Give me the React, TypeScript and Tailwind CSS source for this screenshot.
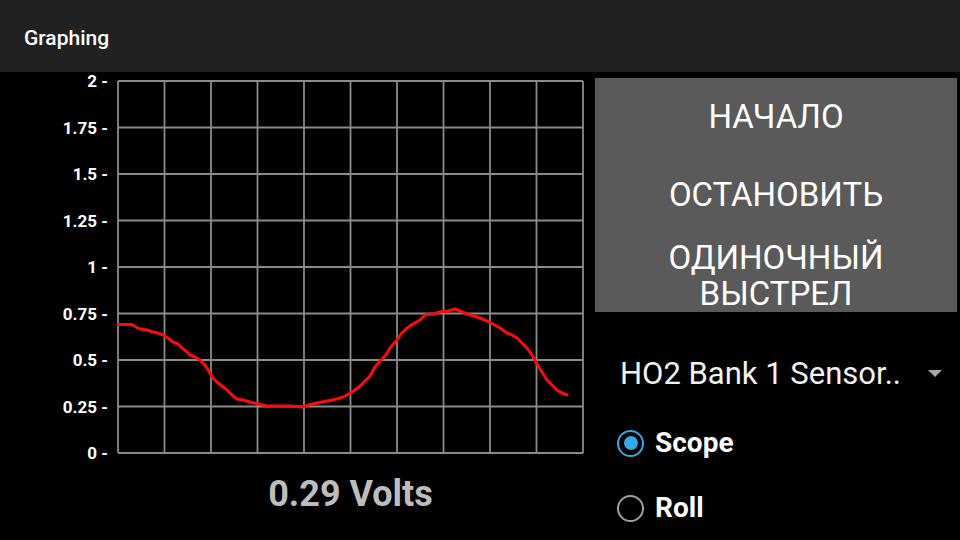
import React from 'react';

const X0 = 118;
const Y0 = 81;
const STEP = 46.5;

const yLabels = ['2', '1.75', '1.5', '1.25', '1', '0.75', '0.5', '0.25', '0'];

// trace of the sensor voltage, in page pixels
const trace: [number, number][] = [
  [118, 324.5], [132, 324.5], [136, 327], [140, 329], [147, 330], [153, 332], [158, 333], [163, 335],
  [168, 338], [173, 342], [178, 344], [182, 348], [186, 351], [190, 355], [195, 357], [200, 360],
  [204, 364], [207, 368], [210, 373], [212, 377], [217, 382], [222, 386], [227, 390], [232, 395],
  [237, 399], [243, 400], [250, 402], [258, 404], [267, 406], [278, 406], [290, 406], [302, 407],
  [309, 405], [317, 403], [327, 401], [337, 399], [343, 397], [349, 394], [355, 390], [360, 386],
  [365, 381], [370, 376], [375, 367], [380, 361], [386, 355], [390, 348], [397, 340], [401, 334],
  [407, 328], [413, 324], [420, 320], [425, 315], [433, 314], [440, 312], [448, 311], [455, 309],
  [460, 311], [467, 314], [474, 316], [480, 318], [487, 321], [493, 324], [500, 328], [507, 333],
  [512, 335], [517, 338], [522, 343], [527, 348], [532, 355], [537, 364], [542, 372], [547, 380],
  [552, 385], [557, 390], [562, 393], [567, 395],
];

const Chart: React.FC = () => (
  <svg width={590} height={392} viewBox="0 72 590 392" className="block">
    {Array.from({ length: 11 }).map((_, i) => (
      <line key={`v${i}`} x1={X0 + i * STEP} y1={Y0} x2={X0 + i * STEP} y2={Y0 + 8 * STEP} stroke="#8a8a8a" strokeWidth={1.8} />
    ))}
    {Array.from({ length: 9 }).map((_, j) => (
      <line key={`h${j}`} x1={X0} y1={Y0 + j * STEP} x2={X0 + 10 * STEP} y2={Y0 + j * STEP} stroke="#8a8a8a" strokeWidth={1.8} />
    ))}
    {yLabels.map((label, j) => (
      <text
        key={label}
        x={108}
        y={Y0 + j * STEP + 6}
        textAnchor="end"
        fill="#ffffff"
        fontFamily="Roboto, 'Liberation Sans', sans-serif"
        fontWeight={700}
        fontSize={17}
      >
        {label} -
      </text>
    ))}
    <polyline
      points={trace.map(([x, y]) => `${x},${y}`).join(' ')}
      fill="none"
      stroke="#ff0a0a"
      strokeWidth={3}
      strokeLinejoin="round"
      strokeLinecap="round"
    />
  </svg>
);

const Radio: React.FC<{ label: string; checked?: boolean }> = ({ label, checked }) => (
  <div className="h-[50px] flex items-center pl-[22px]">
    <div
      className={`w-[27px] h-[27px] rounded-full border-[2.5px] flex items-center justify-center ${
        checked ? 'border-[#35a8e6]' : 'border-[#a0a0a0]'
      }`}
    >
      {checked && <div className="w-[14px] h-[14px] rounded-full bg-[#35a8e6]" />}
    </div>
    <span className="ml-[11px] text-[28px] font-bold text-white leading-none">{label}</span>
  </div>
);

export default function App() {
  return (
    <div className="w-[960px] h-[540px] bg-black flex flex-col overflow-hidden font-['Roboto','Liberation_Sans',sans-serif]">
      <header className="h-[72px] bg-[#212121] flex items-center pl-[24px] pt-[5px] text-white text-[21px] font-medium">
        Graphing
      </header>

      <div className="flex flex-1">
        <div className="w-[590px] flex flex-col">
          <Chart />
          <div className="ml-[118px] w-[465px] mt-[10px] text-center text-[36px] leading-[40px] font-bold text-[#bdbdbd]">
            0.29 Volts
          </div>
        </div>

        <div className="flex-1 flex flex-col pt-[6px] pl-[5px] pr-[3px]">
          <div className="bg-[#5a5a5a] h-[234px] flex flex-col overflow-hidden text-white text-[33px] leading-[38px] text-center">
            <div className="h-[78px] flex items-center justify-center">НАЧАЛО</div>
            <div className="h-[78px] flex items-center justify-center">ОСТАНОВИТЬ</div>
            <div className="h-[78px] flex items-center justify-center pt-[6px] leading-[36px]">
              ОДИНОЧНЫЙ
              <br />
              ВЫСТРЕЛ
            </div>
          </div>

          <div className="mt-[40px] h-[42px] flex items-center justify-between pl-[25px] pr-[15px]">
            <span className="text-[31px] text-[#f2f2f2] leading-none">HO2 Bank 1 Sensor..</span>
            <svg width={14} height={7} viewBox="0 0 14 7">
              <polygon points="0,0 14,0 7,7" fill="#a8a8a8" />
            </svg>
          </div>

          <div className="mt-[24px] flex flex-col gap-[15px]">
            <Radio label="Scope" checked />
            <Radio label="Roll" />
          </div>
        </div>
      </div>
    </div>
  );
}
